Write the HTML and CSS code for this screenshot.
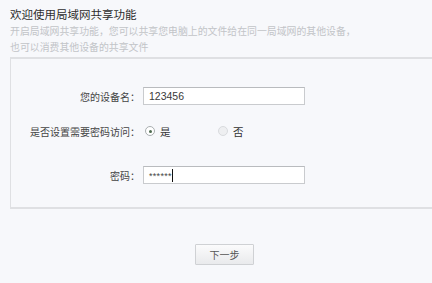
FILE: index.html
```html
<!DOCTYPE html>
<html lang="zh">
<head>
<meta charset="utf-8">
<link rel="stylesheet" href="styles.css">
</head>
<body>
<div class="page">
  <h1 class="title">欢迎使用局域网共享功能</h1>
  <p class="desc">开启局域网共享功能，您可以共享您电脑上的文件给在同一局域网的其他设备，<br>也可以消费其他设备的共享文件</p>
  <div class="panel">
    <div class="row row-name">
      <span class="label">您的设备名：</span>
      <div class="field"><span class="value">123456</span></div>
    </div>
    <div class="row row-radio">
      <span class="label">是否设置需要密码访问：</span>
      <div class="radios">
        <span class="opt"><span class="radio checked"></span><span class="opt-text">是</span></span>
        <span class="opt"><span class="radio disabled"></span><span class="opt-text">否</span></span>
      </div>
    </div>
    <div class="row row-pass">
      <span class="label">密码：</span>
      <div class="field"><span class="stars">******</span><span class="caret"></span></div>
    </div>
  </div>
  <div class="actions"><button class="btn">下一步</button></div>
</div>
</body>
</html>
```
FILE: styles.css
```css
html, body {
  margin: 0;
  padding: 0;
  background: #f7f8fb;
  overflow: hidden;
}
.page {
  width: 432px;
  height: 283px;
  padding: 6px 0 0 10px;
  box-sizing: border-box;
  font-family: "Noto Sans CJK SC", "Noto Sans", sans-serif;
  overflow: hidden;
}
.title {
  margin: 0;
  font-size: 11.5px;
  line-height: 16px;
  font-weight: normal;
  color: #2e2e2e;
}
.desc {
  margin: 1px 0 0;
  font-size: 9.9px;
  line-height: 16px;
  color: #c2c4c8;
}
.panel {
  margin-top: 2px;
  width: 440px;
  height: 152px;
  box-sizing: border-box;
  border: 1px solid #dfe0e3;
  border-top-width: 2px;
  border-bottom-width: 2px;
  padding-top: 28px;
  display: flex;
  flex-direction: column;
}
.row {
  display: flex;
  align-items: center;
  height: 18px;
}
.row-radio { margin-top: 17px; }
.row-pass { margin-top: 26px; }
.label {
  width: 129px;
  text-align: right;
  font-size: 10px;
  color: #444;
  white-space: nowrap;
}
.field {
  margin-left: 3px;
  width: 162px;
  height: 18px;
  box-sizing: border-box;
  border: 1px solid #c9cbce;
  border-top-color: #b9bbbe;
  background: #fff;
  display: flex;
  align-items: center;
  padding-left: 5px;
}
.value {
  font-family: "Liberation Sans", "Noto Sans", sans-serif;
  font-size: 10.5px;
  color: #3a3a3a;
}
.stars {
  font-family: "Liberation Sans", sans-serif;
  font-size: 9px;
  letter-spacing: 0.3px;
  color: #444;
  line-height: 18px;
  padding-top: 1px;
}
.caret {
  width: 1px;
  height: 13px;
  background: #111;
  margin-left: 0;
}
.radios {
  display: flex;
  margin-left: 5px;
}
.opt {
  display: flex;
  align-items: center;
  width: 73px;
}
.radio {
  width: 8px;
  height: 8px;
  border-radius: 50%;
  border: 1px solid #a9aeb0;
  background: #fff;
  position: relative;
}
.radio.checked::after {
  content: "";
  position: absolute;
  left: 2.5px;
  top: 2.5px;
  width: 3px;
  height: 3px;
  border-radius: 50%;
  background: #4d6a4f;
}
.radio.disabled {
  border-color: #d9dbde;
  background: #eeeff1;
}
.opt-text {
  margin-left: 5px;
  font-size: 10.5px;
  color: #333;
}
.actions {
  margin-top: 31px;
  padding-left: 185px;
}
.btn {
  width: 59px;
  height: 21px;
  border: 1px solid #cfd1d4;
  border-radius: 1px;
  background: linear-gradient(#fbfbfc, #e9eaec);
  font-family: "Noto Sans CJK SC", sans-serif;
  font-size: 10px;
  color: #555;
  padding: 0;
}
```
